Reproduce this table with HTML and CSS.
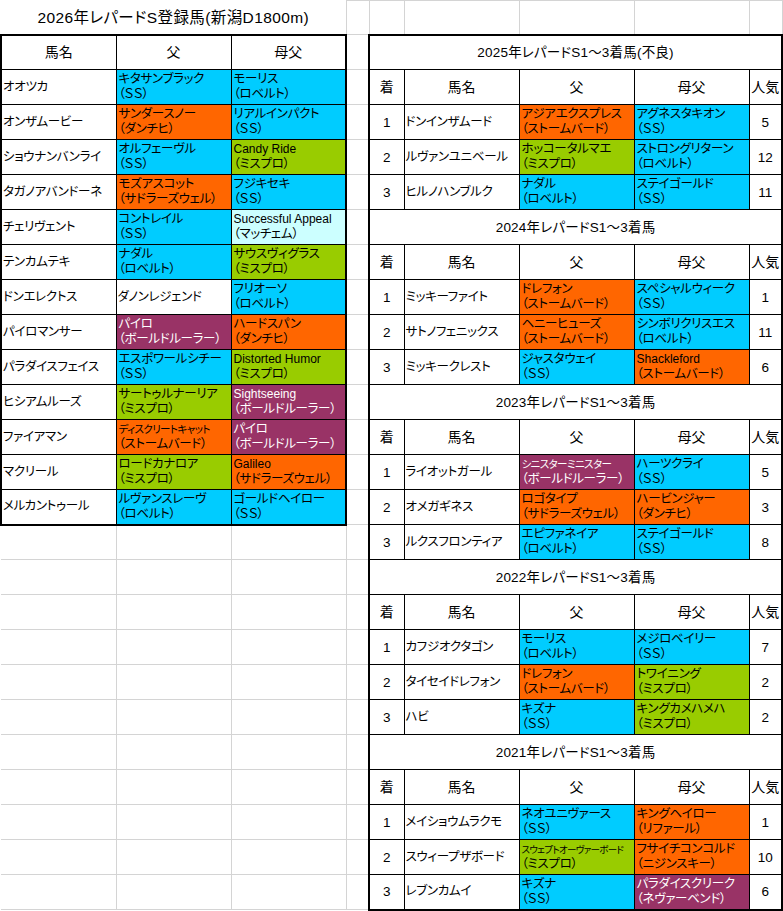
FILE: index.html
```html
<!DOCTYPE html>
<html lang="ja">
<head>
<meta charset="utf-8">
<title>2026年レパードS登録馬</title>
<link rel="stylesheet" href="styles.css">
</head>
<body>
<table class="sheet">
<colgroup>
<col class="w-name"><col class="w-name"><col class="w-name"><col class="w-gap"><col class="w-no"><col class="w-name"><col class="w-name"><col class="w-name"><col class="w-pop"><col class="w-rest">
</colgroup>
<tbody>
<tr class="r-first">
  <td class="g main-title" colspan="3">2026年レパードS登録馬(新潟D1800m)</td>
  <td class="g gt"></td><td class="g gt"></td><td class="g gt"></td><td class="g gt"></td><td class="g gt"></td><td class="g gt"></td><td class="g gt"></td>
</tr>
<tr>
  <td class="b hd L T">馬名</td><td class="b hd T">父</td><td class="b hd R T">母父</td>
  <td class="g"></td>
  <td class="b ttl L R T" colspan="5">2025年レパードS1～3着馬(不良)</td>
  <td class="g"></td>
</tr>
<tr>
  <td class="b nm L">オオツカ</td><td class="b c-cy">キタサンブラック<br>（ＳＳ）</td><td class="b c-cy R">モーリス<br>（ロベルト）</td>
  <td class="g"></td>
  <td class="b hd L">着</td><td class="b hd">馬名</td><td class="b hd">父</td><td class="b hd">母父</td><td class="b hd R">人気</td>
  <td class="g"></td>
</tr>
<tr>
  <td class="b nm L">オンザムービー</td><td class="b c-or">サンダースノー<br>（ダンチヒ）</td><td class="b c-cy R">リアルインパクト<br>（ＳＳ）</td>
  <td class="g"></td>
  <td class="b num L">1</td><td class="b nm">ドンインザムード</td><td class="b c-or">アジアエクスプレス<br>（ストームバード）</td><td class="b c-cy">アグネスタキオン<br>（ＳＳ）</td><td class="b num R">5</td>
  <td class="g"></td>
</tr>
<tr>
  <td class="b nm L">ショウナンバンライ</td><td class="b c-cy">オルフェーヴル<br>（ＳＳ）</td><td class="b c-gr R"><span class="lat">Candy Ride</span><br>（ミスプロ）</td>
  <td class="g"></td>
  <td class="b num L">2</td><td class="b nm">ルヴァンユニベール</td><td class="b c-gr">ホッコータルマエ<br>（ミスプロ）</td><td class="b c-cy">ストロングリターン<br>（ロベルト）</td><td class="b num R">12</td>
  <td class="g"></td>
</tr>
<tr>
  <td class="b nm L">タガノアバンドーネ</td><td class="b c-or">モズアスコット<br>（サドラーズウェル）</td><td class="b c-cy R">フジキセキ<br>（ＳＳ）</td>
  <td class="g"></td>
  <td class="b num L">3</td><td class="b nm">ヒルノハンブルク</td><td class="b c-cy">ナダル<br>（ロベルト）</td><td class="b c-cy">ステイゴールド<br>（ＳＳ）</td><td class="b num R">11</td>
  <td class="g"></td>
</tr>
<tr>
  <td class="b nm L">チェリヴェント</td><td class="b c-cy">コントレイル<br>（ＳＳ）</td><td class="b c-lc R"><span class="lat">Successful Appeal</span><br>（マッチェム）</td>
  <td class="g"></td>
  <td class="b ttl L R" colspan="5">2024年レパードS1～3着馬</td>
  <td class="g"></td>
</tr>
<tr>
  <td class="b nm L">テンカムテキ</td><td class="b c-cy">ナダル<br>（ロベルト）</td><td class="b c-gr R">サウスヴィグラス<br>（ミスプロ）</td>
  <td class="g"></td>
  <td class="b hd L">着</td><td class="b hd">馬名</td><td class="b hd">父</td><td class="b hd">母父</td><td class="b hd R">人気</td>
  <td class="g"></td>
</tr>
<tr>
  <td class="b nm L">ドンエレクトス</td><td class="b nm">ダノンレジェンド</td><td class="b c-cy R">フリオーソ<br>（ロベルト）</td>
  <td class="g"></td>
  <td class="b num L">1</td><td class="b nm">ミッキーファイト</td><td class="b c-or">ドレフォン<br>（ストームバード）</td><td class="b c-cy">スペシャルウィーク<br>（ＳＳ）</td><td class="b num R">1</td>
  <td class="g"></td>
</tr>
<tr>
  <td class="b nm L">パイロマンサー</td><td class="b c-pu">パイロ<br>（ボールドルーラー）</td><td class="b c-or R">ハードスパン<br>（ダンチヒ）</td>
  <td class="g"></td>
  <td class="b num L">2</td><td class="b nm">サトノフェニックス</td><td class="b c-or">ヘニーヒューズ<br>（ストームバード）</td><td class="b c-cy">シンボリクリスエス<br>（ロベルト）</td><td class="b num R">11</td>
  <td class="g"></td>
</tr>
<tr>
  <td class="b nm L">パラダイスフェイス</td><td class="b c-cy">エスポワールシチー<br>（ＳＳ）</td><td class="b c-gr R"><span class="lat">Distorted Humor</span><br>（ミスプロ）</td>
  <td class="g"></td>
  <td class="b num L">3</td><td class="b nm">ミッキークレスト</td><td class="b c-cy">ジャスタウェイ<br>（ＳＳ）</td><td class="b c-or"><span class="lat">Shackleford</span><br>（ストームバード）</td><td class="b num R">6</td>
  <td class="g"></td>
</tr>
<tr>
  <td class="b nm L">ヒシアムルーズ</td><td class="b c-gr">サートゥルナーリア<br>（ミスプロ）</td><td class="b c-pu R"><span class="lat">Sightseeing</span><br>（ボールドルーラー）</td>
  <td class="g"></td>
  <td class="b ttl L R" colspan="5">2023年レパードS1～3着馬</td>
  <td class="g"></td>
</tr>
<tr>
  <td class="b nm L">ファイアマン</td><td class="b c-or"><span class="sm">ディスクリートキャット</span><br>（ストームバード）</td><td class="b c-pu R">パイロ<br>（ボールドルーラー）</td>
  <td class="g"></td>
  <td class="b hd L">着</td><td class="b hd">馬名</td><td class="b hd">父</td><td class="b hd">母父</td><td class="b hd R">人気</td>
  <td class="g"></td>
</tr>
<tr>
  <td class="b nm L">マクリール</td><td class="b c-gr">ロードカナロア<br>（ミスプロ）</td><td class="b c-or R"><span class="lat">Galileo</span><br>（サドラーズウェル）</td>
  <td class="g"></td>
  <td class="b num L">1</td><td class="b nm">ライオットガール</td><td class="b c-pu"><span class="sm">シニスターミニスター</span><br>（ボールドルーラー）</td><td class="b c-cy">ハーツクライ<br>（ＳＳ）</td><td class="b num R">5</td>
  <td class="g"></td>
</tr>
<tr>
  <td class="b nm L B">メルカントゥール</td><td class="b c-cy B">ルヴァンスレーヴ<br>（ロベルト）</td><td class="b c-cy R B">ゴールドヘイロー<br>（ＳＳ）</td>
  <td class="g"></td>
  <td class="b num L">2</td><td class="b nm">オメガギネス</td><td class="b c-or">ロゴタイプ<br>（サドラーズウェル）</td><td class="b c-or">ハービンジャー<br>（ダンチヒ）</td><td class="b num R">3</td>
  <td class="g"></td>
</tr>
<tr>
  <td class="g"></td><td class="g"></td><td class="g"></td><td class="g"></td>
  <td class="b num L">3</td><td class="b nm">ルクスフロンティア</td><td class="b c-cy">エピファネイア<br>（ロベルト）</td><td class="b c-cy">ステイゴールド<br>（ＳＳ）</td><td class="b num R">8</td>
  <td class="g"></td>
</tr>
<tr>
  <td class="g"></td><td class="g"></td><td class="g"></td><td class="g"></td>
  <td class="b ttl L R" colspan="5">2022年レパードS1～3着馬</td>
  <td class="g"></td>
</tr>
<tr>
  <td class="g"></td><td class="g"></td><td class="g"></td><td class="g"></td>
  <td class="b hd L">着</td><td class="b hd">馬名</td><td class="b hd">父</td><td class="b hd">母父</td><td class="b hd R">人気</td>
  <td class="g"></td>
</tr>
<tr>
  <td class="g"></td><td class="g"></td><td class="g"></td><td class="g"></td>
  <td class="b num L">1</td><td class="b nm">カフジオクタゴン</td><td class="b c-cy">モーリス<br>（ロベルト）</td><td class="b c-cy">メジロベイリー<br>（ＳＳ）</td><td class="b num R">7</td>
  <td class="g"></td>
</tr>
<tr>
  <td class="g"></td><td class="g"></td><td class="g"></td><td class="g"></td>
  <td class="b num L">2</td><td class="b nm">タイセイドレフォン</td><td class="b c-or">ドレフォン<br>（ストームバード）</td><td class="b c-gr">トワイニング<br>（ミスプロ）</td><td class="b num R">2</td>
  <td class="g"></td>
</tr>
<tr>
  <td class="g"></td><td class="g"></td><td class="g"></td><td class="g"></td>
  <td class="b num L">3</td><td class="b nm">ハビ</td><td class="b c-cy">キズナ<br>（ＳＳ）</td><td class="b c-gr">キングカメハメハ<br>（ミスプロ）</td><td class="b num R">2</td>
  <td class="g"></td>
</tr>
<tr>
  <td class="g"></td><td class="g"></td><td class="g"></td><td class="g"></td>
  <td class="b ttl L R" colspan="5">2021年レパードS1～3着馬</td>
  <td class="g"></td>
</tr>
<tr>
  <td class="g"></td><td class="g"></td><td class="g"></td><td class="g"></td>
  <td class="b hd L">着</td><td class="b hd">馬名</td><td class="b hd">父</td><td class="b hd">母父</td><td class="b hd R">人気</td>
  <td class="g"></td>
</tr>
<tr>
  <td class="g"></td><td class="g"></td><td class="g"></td><td class="g"></td>
  <td class="b num L">1</td><td class="b nm">メイショウムラクモ</td><td class="b c-cy">ネオユニヴァース<br>（ＳＳ）</td><td class="b c-or">キングヘイロー<br>（リファール）</td><td class="b num R">1</td>
  <td class="g"></td>
</tr>
<tr>
  <td class="g"></td><td class="g"></td><td class="g"></td><td class="g"></td>
  <td class="b num L">2</td><td class="b nm">スウィープザボード</td><td class="b c-gr"><span class="xs">スウェプトオーヴァーボード</span><br>（ミスプロ）</td><td class="b c-or">フサイチコンコルド<br>（ニジンスキー）</td><td class="b num R">10</td>
  <td class="g"></td>
</tr>
<tr>
  <td class="g"></td><td class="g"></td><td class="g"></td><td class="g"></td>
  <td class="b num L B">3</td><td class="b nm B">レブンカムイ</td><td class="b c-cy B">キズナ<br>（ＳＳ）</td><td class="b c-pu B">パラダイスクリーク<br>（ネヴァーベンド）</td><td class="b num R B">6</td>
  <td class="g"></td>
</tr>
</tbody>
</table>
</body>
</html>
```

FILE: styles.css
```css
html, body {
  margin: 0;
  padding: 0;
  background: #ffffff;
  overflow: hidden;
}

.sheet {
  border-collapse: collapse;
  table-layout: fixed;
  width: 783px;
  font-family: "Liberation Sans", "Noto Sans CJK JP", sans-serif;
  font-size: 12.5px;
  line-height: 15px;
  letter-spacing: -0.3px;
  color: #000000;
  font-feature-settings: "palt" 1;
}

.w-name { width: 115px; }
.w-gap { width: 23px; }
.w-no { width: 35px; }
.w-pop { width: 33px; }
.w-rest { width: 2px; }

.sheet tr { height: 35px; }
.sheet tr.r-first { height: 34px; }

.sheet td {
  padding: 0 2px;
  vertical-align: middle;
  white-space: nowrap;
  overflow: hidden;
  text-align: left;
}

/* spreadsheet gridline cells */
.sheet td.g {
  padding: 0;
  border-right: 1px solid #d4d4d4;
  border-bottom: 1px solid #d4d4d4;
}
.g.gt { border-top: 1px solid #d4d4d4; }

.sheet td.main-title {
  text-align: center;
  font-size: 15.5px;
  letter-spacing: 0.4px;
  border-bottom: none;
}

/* bordered table cells */
.b { border: 1px solid #000000; }
.b.L { border-left: 2px solid #000000; }
.b.R { border-right: 2px solid #000000; }
.b.T { border-top: 2px solid #000000; }
.b.B { border-bottom: 2px solid #000000; }

.sheet td.hd,
.sheet td.ttl,
.sheet td.num {
  text-align: center;
  padding: 0;
}
.hd { font-size: 14px; letter-spacing: 0; }
.ttl { font-size: 13.5px; letter-spacing: 0.2px; }
.num { font-size: 13.5px; letter-spacing: 0; }
.sheet td.nm { padding-left: 1px; }

.c-cy { background: #00ccff; }
.c-or { background: #ff6600; }
.c-gr { background: #99cc00; }
.c-pu { background: #993366; color: #ffffff; }
.c-lc { background: #ccffff; }

.lat { font-size: 12px; letter-spacing: 0; }
.sm { font-size: 10.5px; letter-spacing: -0.6px; }
.xs { font-size: 9.5px; letter-spacing: -0.7px; }
```
